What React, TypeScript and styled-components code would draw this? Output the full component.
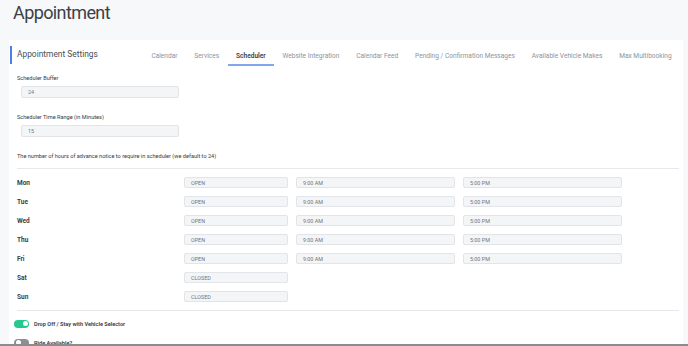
import React from 'react';
import styled, { createGlobalStyle } from 'styled-components';

interface IDay {
  name: string;
  open: boolean;
}

const days: IDay[] = [
  { name: 'Mon', open: true },
  { name: 'Tue', open: true },
  { name: 'Wed', open: true },
  { name: 'Thu', open: true },
  { name: 'Fri', open: true },
  { name: 'Sat', open: false },
  { name: 'Sun', open: false },
];

const tabs = [
  'Calendar',
  'Services',
  'Scheduler',
  'Website Integration',
  'Calendar Feed',
  'Pending / Confirmation Messages',
  'Available Vehicle Makes',
  'Max Multibooking',
];

const App = () => (
  <Page>
    <GlobalStyle />
    <Title>Appointment</Title>
    <Card>
      <Header>
        <SettingsTitle>Appointment Settings</SettingsTitle>
        <Tabs>
          {tabs.map((t) => (
            <Tab key={t} active={t === 'Scheduler'}>
              {t}
            </Tab>
          ))}
        </Tabs>
      </Header>
      <Body>
        <Label>Scheduler Buffer</Label>
        <SmallInput>24</SmallInput>
        <Label>Scheduler Time Range (in Minutes)</Label>
        <SmallInput>15</SmallInput>
        <Note>The number of hours of advance notice to require in scheduler (we default to 24)</Note>
        <Divider />
        <DayList>
          {days.map((d) => (
            <DayRow key={d.name}>
              <DayName>{d.name}</DayName>
              <StatusBox>{d.open ? 'OPEN' : 'CLOSED'}</StatusBox>
              {d.open && (
                <>
                  <TimeBox>9:00 AM</TimeBox>
                  <TimeBox>5:00 PM</TimeBox>
                </>
              )}
            </DayRow>
          ))}
        </DayList>
        <Divider />
        <ToggleRow>
          <Toggle on />
          <ToggleLabel>Drop Off / Stay with Vehicle Selector</ToggleLabel>
        </ToggleRow>
        <ToggleRow>
          <Toggle on={false} />
          <ToggleLabel>Ride Available?</ToggleLabel>
        </ToggleRow>
      </Body>
    </Card>
  </Page>
);

const GlobalStyle = createGlobalStyle`
  body {
    margin: 0;
    background: #f7f8fa;
    font-family: Roboto, "Noto Sans", sans-serif;
    color: #343a40;
    -webkit-font-smoothing: antialiased;
  }
`;

const Page = styled.div`
  height: 346px;
  box-sizing: border-box;
  overflow: hidden;
  padding: 0 5px 0 9px;
  border-bottom: 2px solid #8c8c8c;
`;

const Title = styled.h1`
  margin: 0;
  padding: 2px 0 0 4px;
  height: 40px;
  box-sizing: border-box;
  font-size: 18px;
  letter-spacing: -0.6px;
  font-weight: 400;
  line-height: 22px;
  color: #3b4046;
`;

const Card = styled.div`
  background: #fff;
  height: 320px;
`;

const Header = styled.div`
  display: flex;
  align-items: center;
  height: 31px;
  padding-top: 1px;
  box-sizing: border-box;
`;

const SettingsTitle = styled.div`
  border-left: 2px solid #4a80e6;
  margin-left: 1px;
  padding-left: 5px;
  height: 18px;
  line-height: 17px;
  font-size: 8.4px;
  color: #495057;
  width: 126px;
  margin-top: -3px;
`;

const Tabs = styled.div`
  display: flex;
  align-self: flex-start;
  height: 25px;
`;

const Tab = styled.div<{ active: boolean }>`
  display: flex;
  align-items: center;
  padding: 6px 8.4px 0;
  font-size: 6.6px;
  color: ${(p) => (p.active ? '#3b4046' : '#8c939b')};
  font-weight: ${(p) => (p.active ? 600 : 400)};
  border-bottom: 2px solid ${(p) => (p.active ? '#84a6ea' : 'transparent')};
  box-sizing: border-box;
  white-space: nowrap;
`;

const Body = styled.div`
  padding: 3px 4px 0 8px;
`;

const Label = styled.div`
  font-size: 5.6px;
  line-height: 8px;
  color: #343a40;
`;

const Field = styled.div`
  background: #f4f5f7;
  border: 1px solid #e1e4e8;
  border-radius: 2px;
  box-sizing: border-box;
  font-size: 5.4px;
  color: #6c757d;
  display: flex;
  align-items: center;
  padding-left: 6px;
`;

const SmallInput = styled(Field)`
  width: 158px;
  height: 12px;
  margin: 4px 0 15px 4px;
`;

const Note = styled.div`
  font-size: 5.6px;
  line-height: 8px;
`;

const Divider = styled.div`
  height: 1px;
  background: #e6e8eb;
  margin: 8px 0 0;
`;

const DayList = styled.div`
  display: flex;
  flex-direction: column;
  gap: 8px;
  padding-top: 8px;
`;

const DayRow = styled.div`
  display: flex;
  align-items: center;
  gap: 8px;
  height: 11px;
`;

const DayName = styled.div`
  width: 159px;
  font-size: 6.5px;
  font-weight: 700;
  color: #3a3f45;
`;

const StatusBox = styled(Field)`
  width: 104px;
  height: 11px;
`;

const TimeBox = styled(Field)`
  width: 159px;
  height: 11px;
`;

const ToggleRow = styled.div`
  display: flex;
  align-items: center;
  gap: 5px;
  margin: 8px 0 0 -3px;
  height: 9px;
  & + & {
    margin-top: 10px;
  }
`;

const Toggle = styled.div<{ on: boolean }>`
  position: relative;
  width: 15px;
  height: 8px;
  border-radius: 4px;
  background: ${(p) => (p.on ? '#25c88e' : '#8b8f95')};
  &::after {
    content: '';
    position: absolute;
    top: 1.5px;
    left: ${(p) => (p.on ? '9px' : '2px')};
    width: 5px;
    height: 5px;
    border-radius: 50%;
    background: #fff;
  }
`;

const ToggleLabel = styled.div`
  font-size: 5.6px;
  font-weight: 600;
  color: #343a40;
`;

export default App;
